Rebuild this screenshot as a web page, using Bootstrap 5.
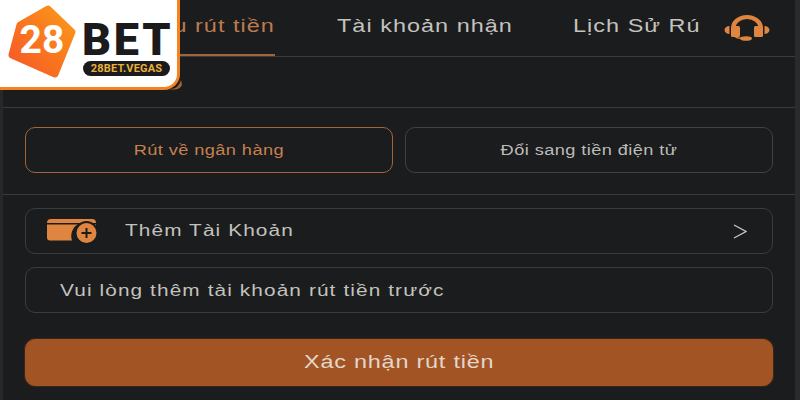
<!DOCTYPE html>
<html lang="vi">
<head>
  <meta charset="UTF-8">
  <title>Rút tiền</title>
  <link rel="stylesheet" href="https://cdn.jsdelivr.net/npm/bootstrap@5.3.3/dist/css/bootstrap.min.css">
  <script src="https://cdn.jsdelivr.net/npm/bootstrap@5.3.3/dist/js/bootstrap.bundle.min.js"></script>
  <style>
    html, body { height: 400px; overflow: hidden; background: #1a1c1e; }
    body { font-family: "Liberation Sans", Arial, sans-serif; color: #c9c7c2; }
    .khung { width: 800px; height: 400px; border-left: 3px solid #26282a; border-right: 5px solid #2a2b2d; background: #1a1c1e; position: relative; }
    /* the text in the screenshot is stretched sideways */
    .gian { display: inline-block; white-space: nowrap; transform: scaleX(1.3); transform-origin: left center; }
    .gian-giua { transform-origin: center; }
    .gian-phai { transform-origin: right center; }
    .thanh-tab { height: 57px; border-bottom: 1px solid #3a3b3d; }
    .muc-tab { height: 56px; line-height: 52px; font-size: 18px; letter-spacing: .8px; color: #c4c2be; white-space: nowrap; }
    .muc-tab.dang-chon { width: 272px; text-align: right; color: #bf7a4e; border-bottom: 2px solid #a5633a; }
    .tab-2 { margin-left: 62px; width: 236px; }
    .tab-3 { width: 151px; }
    .hang-trong { height: 51px; border-bottom: 1px solid #3a3b3d; }
    .hang-nut { height: 87px; border-bottom: 1px solid #3a3b3d; padding: 19px 22px 0; gap: 12px; }
    .nut-chon { flex: 1; height: 46px; line-height: 45px; border: 1px solid #3f4143; border-radius: 10px; text-align: center; font-size: 14px; letter-spacing: .32px; color: #bdbbb7; }
    .nut-chon.dang-chon { border-color: #a5633a; color: #c9804f; }
    .vung-duoi { padding: 13px 22px 0; }
    .o-dong { height: 46px; border: 1px solid #3a3c3e; border-radius: 10px; font-size: 16px; letter-spacing: .85px; color: #c4c2bc; }
    .o-them { padding: 0 25px 0 21px; margin-bottom: 13px; }
    .o-them .gian { margin-left: 26px; }
    .o-ghi-chu { padding: 2px 0 0 34px; margin-bottom: 26px; }
    .nut-xac-nhan { height: 47px; width: 100%; border: 1px solid #a25424; border-radius: 10px; background: #a25424; box-shadow: 0 0 0 1px #3a2518; color: #e2d6cb; font-size: 18px; letter-spacing: .6px; padding: 0; }
    .logo-goc { position: absolute; left: -3px; top: 0; width: 180px; height: 90px; background: #fff; border-right: 3px solid #f5821f; border-bottom: 3px solid #f5821f; border-bottom-right-radius: 16px; font-family: Roboto, "Liberation Sans", sans-serif; }
    .logo-so { position: absolute; left: 8px; top: 5px; width: 68px; height: 73px; }
    .logo-so-chu { position: absolute; left: 8px; top: 21px; width: 68px; text-align: center; font-size: 39px; line-height: 38px; font-weight: 700; color: #fff; }
    .logo-bet { position: absolute; left: 82px; top: 21px; font-size: 45px; line-height: 38px; font-weight: 900; color: #1b1b1d; letter-spacing: 2.8px; }
    .logo-web { position: absolute; left: 83px; top: 61px; width: 87px; height: 15px; border-radius: 8px; background: #1b1b1d; color: #e9b13a; font-size: 11px; line-height: 15px; font-weight: 700; text-align: center; letter-spacing: .15px; }
    .dau-nho { position: absolute; left: 164px; top: 75px; }
  </style>
</head>
<body>
  <div class="khung">
    <div class="thanh-tab d-flex align-items-start">
      <div class="muc-tab dang-chon"><span class="gian gian-phai">Yêu cầu rút tiền</span></div>
      <div class="muc-tab tab-2"><span class="gian">Tài khoản nhận</span></div>
      <div class="muc-tab tab-3"><span class="gian">Lịch Sử Rú</span></div>
      <svg class="align-self-center" width="46" height="26" viewBox="0 0 46 26" fill="#e0853f">
        <path d="M7 13a16 13 0 0 1 32 0h-4.500a11.500 9 0 0 0-23 0z"/>
        <rect x="7" y="11" width="9" height="11" rx="1.500"/>
        <rect x="30" y="11" width="9" height="11" rx="1.500"/>
        <path d="M5.500 11v8a5 4 0 0 1 0-8zM40.500 11v8a5 4 0 0 0 0-8z"/>
        <path d="M10 21q1 3 8 3v-1.500q-5 0-6-1.500z"/>
        <ellipse cx="22" cy="23.500" rx="6" ry="2.300"/>
      </svg>
    </div>
    <div class="hang-trong"></div>
    <div class="hang-nut d-flex align-items-start">
      <div class="nut-chon dang-chon"><span class="gian gian-giua">Rút về ngân hàng</span></div>
      <div class="nut-chon"><span class="gian gian-giua">Đổi sang tiền điện tử</span></div>
    </div>
    <div class="vung-duoi">
      <div class="o-dong o-them d-flex align-items-center">
        <svg width="52" height="24" viewBox="0 0 52 24" fill="none">
          <path d="M0 4q0-4 4-4h41q4 0 4 4z" fill="#e0853f"/>
          <path d="M0 5.500h49v13q0 3-3 3H3q-3 0-3-3z" fill="#e0853f"/>
          <path d="M25 21.500a14 14 0 0 1 24-13.500v14H25z" fill="#1a1c1e"/>
          <circle cx="39.500" cy="14" r="11" fill="#e0853f" stroke="#1a1c1e" stroke-width="2"/>
          <path d="M39.500 9v10M34.500 14h10" stroke="#1a1c1e" stroke-width="2"/>
        </svg>
        <span class="gian">Thêm Tài Khoản</span>
        <svg class="ms-auto" width="14" height="15" viewBox="0 0 14 15" fill="none"><path d="M1 1l12 6.500-12 6.500" stroke="#c9c7c2" stroke-width="1.300"/></svg>
      </div>
      <div class="o-dong o-ghi-chu d-flex align-items-center"><span class="gian">Vui lòng thêm tài khoản rút tiền trước</span></div>
      <button type="button" class="btn nut-xac-nhan"><span class="gian gian-giua">Xác nhận rút tiền</span></button>
    </div>
    <svg class="dau-nho" width="16" height="16" viewBox="0 0 16 16"><path d="M2 14q9 1 12-9l1 5q-3 6-13 4z" fill="#a5633a"/></svg>
    <div class="logo-goc">
      <svg class="logo-so" viewBox="0 0 68 73">
        <defs><linearGradient id="camLogo" x1="1" y1="0" x2="0" y2="1"><stop offset="0" stop-color="#fb9a1b"/><stop offset=".6" stop-color="#f9701f"/><stop offset="1" stop-color="#f4572a"/></linearGradient></defs>
        <path d="M40 4 64 27 47 69 4 50 12 20Z" fill="url(#camLogo)" stroke="url(#camLogo)" stroke-width="7" stroke-linejoin="round"/>
      </svg>
      <div class="logo-so-chu">28</div>
      <div class="logo-bet">BET</div>
      <div class="logo-web">28BET.VEGAS</div>
    </div>
  </div>
</body>
</html>
